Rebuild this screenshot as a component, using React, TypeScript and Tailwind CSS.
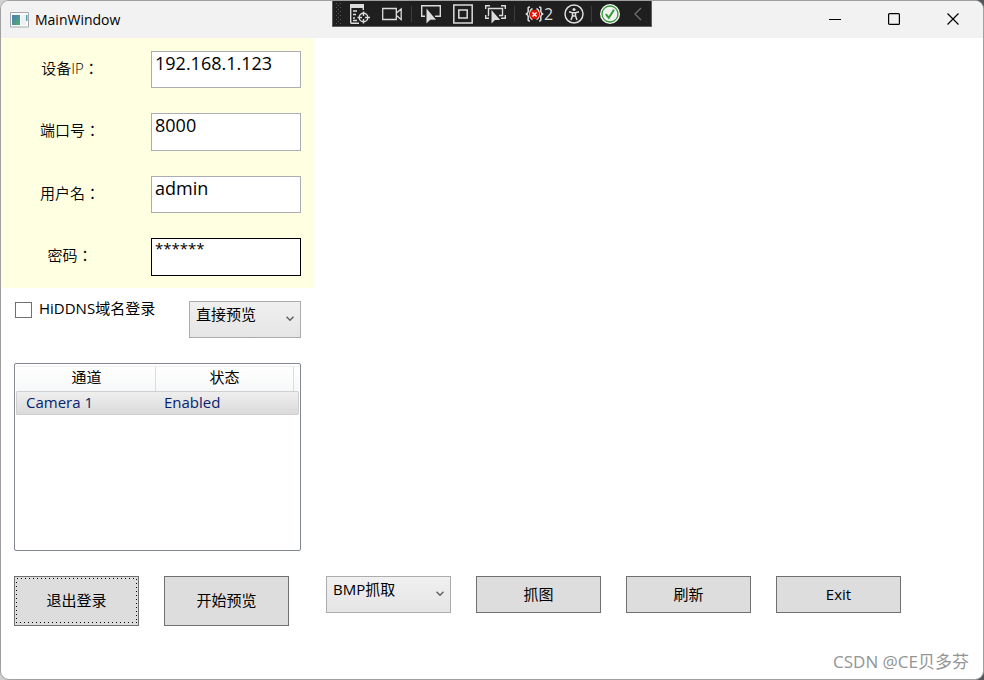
import { useState } from 'react';
import type { ReactNode } from 'react';

interface Field {
  id: string;
  label: string;
  value: string;
  boxClass: string;
}

const FIELDS: Field[] = [
  { id: 'ip', label: '设备IP：', value: '192.168.1.123', boxClass: 'h-[37px] pb-3.5 text-[18px] border-[#abadb3]' },
  { id: 'port', label: '端口号：', value: '8000', boxClass: 'h-[38px] pb-3.5 text-[18px] border-[#abadb3]' },
  { id: 'user', label: '用户名：', value: 'admin', boxClass: 'h-[37px] pb-3.5 text-[18px] border-[#abadb3]' },
  { id: 'password', label: '密码：', value: '******', boxClass: 'h-[38px] pb-[18px] text-[15px] border-black' },
];

const CHANNELS = [{ name: 'Camera 1', status: 'Enabled' }];

function ToolButton({ label, className, children }: { label: string; className: string; children: ReactNode }) {
  return (
    <button type="button" aria-label={label} className={`flex h-full items-center justify-center ${className}`}>
      {children}
    </button>
  );
}

function Separator() {
  return <span className="mx-[3px] h-4 w-px bg-[#3d3d3d]" />;
}

function DebugToolbar() {
  return (
    <div className="absolute -top-px left-1/2 flex h-[27px] w-80 -translate-x-1/2 items-center border border-[#5f5f5f] bg-[#1f1f1f] text-[#dcdcdc]">
      <svg className="mr-px ml-0.5" width="8" height="22" viewBox="0 0 8 22" fill="#555" shapeRendering="crispEdges">
        {[0, 4, 8, 12, 16, 20].map((y) => (
          <g key={y}>
            <path d={`M1 ${y}h1v1h-1zM5 ${y}h1v1h-1z`} />
            <path d={`M3 ${y + 2}h1v1h-1z`} />
          </g>
        ))}
      </svg>
      <ToolButton label="实时可视化树" className="w-8">
        <svg width="20" height="20" viewBox="0 0 20 20" fill="none" stroke="currentColor" strokeWidth="1.4">
          <path d="M.7 19.3V.7h12.6V6M.7 2.2h12.6M.7 19.3H9" />
          <path d="M1 1h12v3H1z" fill="currentColor" stroke="none" />
          <path d="M3 7h4M3 10.500h3M3 14h2M3 16.500h4" />
          <circle cx="13.500" cy="13.500" r="4.300" />
          <path d="M13.500 7.500v4.500M13.500 15v4.500M7.500 13.500H12M15 13.500h5" />
        </svg>
      </ToolButton>
      <ToolButton label="录制" className="w-8">
        <svg width="20" height="20" viewBox="0 0 20 20" fill="none" stroke="currentColor" strokeWidth="1.3">
          <path d="M.7 4.500h13.600v11H.7zM14.500 9l4.700-4v10.500l-4.700-4" />
        </svg>
      </ToolButton>
      <Separator />
      <ToolButton label="选择元素" className="w-8">
        <svg width="20" height="20" viewBox="0 0 20 20" fill="none" stroke="currentColor" strokeWidth="1.4">
          <path d="M4 12.300H.7V1.700h18.600v10.600H14" />
          <path d="M5.500 4.500v15l3.700-3.700h5.800z" fill="currentColor" stroke="none" />
        </svg>
      </ToolButton>
      <ToolButton label="显示布局装饰器" className="w-8">
        <svg width="20" height="20" viewBox="0 0 20 20" fill="none" stroke="currentColor" strokeWidth="1.5">
          <path d="M.8 1h18.400v18H.8zM5.800 6h8.400v8H5.800z" />
        </svg>
      </ToolButton>
      <ToolButton label="跟踪具有焦点的元素" className="w-8">
        <svg width="21" height="20" viewBox="0 0 21 20" fill="none" stroke="currentColor" strokeWidth="1.4">
          <path d="M.7 5V1.700H5M16 1.700h4.300V5M.7 11v3.300H4M20.300 11v3.300H16" />
          <path d="M4 11.500H3.500V4.500h14v7H14" />
          <path d="M6.500 6v13.500l3.400-3.400h5.300z" fill="currentColor" stroke="none" />
        </svg>
      </ToolButton>
      <Separator />
      <ToolButton label="绑定失败" className="w-[42px]">
        <svg width="19" height="16" viewBox="0 0 19 16" fill="none" stroke="currentColor" strokeWidth="1.500">
          <path d="M5 1C2 1 3.500 3 3.200 5.500 3 7 2 7.800.8 8 2 8.200 3 9 3.200 10.500 3.500 13 2 15 5 15" />
          <path d="M14 1c3 0 1.500 2 1.800 4.500.2 1.500 1.200 2.300 2.400 2.500-1.200.2-2.200 1-2.400 2.500-.3 2.500 1.200 4.500-1.800 4.500" />
          <path d="M7.500 2.500C4 4 4 12 7.500 13.500M11.500 2.500C15 4 15 12 11.500 13.500" />
          <circle cx="9.500" cy="8.500" r="4.800" fill="#e51400" stroke="none" />
          <path d="M7.500 6.500l4 4M11.500 6.500l-4 4" stroke="#fff" />
        </svg>
        <span className="text-[16px] leading-5">2</span>
      </ToolButton>
      <ToolButton label="辅助功能检查" className="w-7">
        <svg width="20" height="20" viewBox="0 0 20 20" fill="none" stroke="currentColor" strokeWidth="1.5">
          <circle cx="10" cy="10" r="9" />
          <circle cx="10" cy="5.500" r="1.600" fill="currentColor" stroke="none" />
          <path d="M5 7.800l3.500 1v3L7 16M15 7.800l-3.500 1v3L13 16M8.500 8.800h3M8.500 12h3" />
        </svg>
      </ToolButton>
      <Separator />
      <ToolButton label="热重载" className="w-[30px]">
        <svg width="20" height="20" viewBox="0 0 20 20" fill="none">
          <circle cx="10" cy="10" r="10" fill="#f2f2f2" />
          <circle cx="10" cy="10" r="8" stroke="#339933" strokeWidth="1.300" />
          <path d="M5.800 10.200l3 3.600 5.200-8" stroke="#339933" strokeWidth="2" />
        </svg>
      </ToolButton>
      <ToolButton label="折叠" className="w-[26px]">
        <svg width="8" height="14" viewBox="0 0 8 14" fill="none" stroke="#707070" strokeWidth="1.300">
          <path d="M7 1L1 7l6 6" />
        </svg>
      </ToolButton>
    </div>
  );
}

function TitleBar() {
  return (
    <header className="relative flex h-[37px] items-center bg-[#f2f2f2]">
      <svg className="ml-[9px]" width="19" height="16" viewBox="0 0 19 16" fill="none">
        <defs>
          <linearGradient id="pane" x1="0" y1="0" x2="1" y2="1">
            <stop offset="0" stopColor="#4a7fb5" />
            <stop offset="1" stopColor="#4fae6c" />
          </linearGradient>
        </defs>
        <path d="M.5.500h18v14.500H.5z" fill="#fff" stroke="#a3a9af" />
        <path d="M2 3h8v10H2z" fill="url(#pane)" />
        <path d="M11 3h5v10h-5z" fill="#eef1f4" />
        <path d="M16 3h1.500v6H16z" fill="#5a9fb0" />
      </svg>
      <h1 className="ml-[6px] text-[14px] leading-5">MainWindow</h1>
      <DebugToolbar />
      <div className="ml-auto flex h-full pr-px pb-0.5">
        <button type="button" aria-label="最小化" className="flex w-[59px] items-center justify-center">
          <svg width="12" height="12" viewBox="0 0 12 12" stroke="#000">
            <path d="M0 6.500h12" />
          </svg>
        </button>
        <button type="button" aria-label="最大化" className="flex w-[59px] items-center justify-center">
          <svg width="12" height="12" viewBox="0 0 12 12" fill="none" stroke="#000" strokeWidth="1.200">
            <rect x=".6" y=".6" width="10.800" height="10.800" rx="1" />
          </svg>
        </button>
        <button type="button" aria-label="关闭" className="flex w-[59px] items-center justify-center">
          <svg width="12" height="12" viewBox="0 0 12 12" stroke="#000" strokeWidth="1.200">
            <path d="M.5.500l11 11M11.500.500l-11 11" />
          </svg>
        </button>
      </div>
    </header>
  );
}

function ComboBox({ label, options, className }: { label: string; options: string[]; className: string }) {
  return (
    <div className={`relative ${className}`}>
      <select
        aria-label={label}
        className="block h-[37px] w-full appearance-none border border-[#acacac] bg-linear-to-b from-[#f0f0f0] to-[#e5e5e5] pb-3 pl-[6px] text-[15px] leading-5 outline-none"
      >
        {options.map((o) => (
          <option key={o}>{o}</option>
        ))}
      </select>
      <svg
        className="pointer-events-none absolute top-[15px] right-[7px]"
        width="8"
        height="6"
        viewBox="0 0 8 6"
        fill="none"
        stroke="#606060"
        strokeWidth="1.500"
      >
        <path d="M.5.800L4 4.300 7.500.800" />
      </svg>
    </div>
  );
}

function PushButton({ children, className }: { children: ReactNode; className: string }) {
  return (
    <button
      type="button"
      className={`relative w-[125px] border border-[#707070] bg-[#dddddd] pb-0.5 text-[15px] leading-5 ${className}`}
    >
      {children}
    </button>
  );
}

// 键盘焦点虚线框
function FocusRect() {
  return (
    <svg className="absolute inset-px size-[calc(100%-2px)]" fill="none" stroke="#000" shapeRendering="crispEdges">
      <rect x="0.500" y="0.500" width="120" height="44" strokeDasharray="1 3" />
    </svg>
  );
}

function ChannelList() {
  return (
    <div className="mt-[25px] ml-[13px] flex-1 rounded-[2px] border border-[#828790] px-px pt-0.5">
      <table className="w-full table-fixed border-separate border-spacing-0 text-[15px] leading-5">
        <colgroup>
          <col className="w-[140px]" />
          <col className="w-[138px]" />
          <col />
        </colgroup>
        <thead>
          <tr className="h-[25px] bg-linear-to-b from-white to-[#f7f8f9]">
            <th className="border-t border-r border-t-[#f0f0f0] border-r-[#dcdcdc] pt-0 pr-0 pb-1 pl-0.5 font-normal">通道</th>
            <th className="border-t border-r border-t-[#f0f0f0] border-r-[#dcdcdc] px-0 pt-0 pb-1 font-normal">状态</th>
            <th className="border-t border-t-[#f0f0f0] p-0" />
          </tr>
        </thead>
        <tbody>
          {CHANNELS.map((c) => (
            <tr key={c.name} className="h-6 bg-linear-to-b from-[#f0f0f0] to-[#d9d9d9] text-[#042271]">
              <td className="rounded-l-[2px] border-y border-l border-[#cfcfcf] pt-0 pr-0 pb-0.5 pl-[9px]">{c.name}</td>
              <td className="border-y border-[#cfcfcf] pt-0 pr-0 pb-0.5 pl-2">{c.status}</td>
              <td className="rounded-r-[2px] border-y border-r border-[#cfcfcf] p-0" />
            </tr>
          ))}
        </tbody>
      </table>
    </div>
  );
}

export default function App() {
  const [useDdns, setUseDdns] = useState(false);

  return (
    <div className="flex min-h-screen bg-linear-to-r from-[#d0d0d0] to-[#55555f] font-['Open_Sans','Noto_Sans_CJK_SC',sans-serif] text-black">
      <div className="flex flex-1 flex-col overflow-hidden rounded-[9px] border border-[#a0a0a0] bg-white">
        <TitleBar />

        <main className="flex flex-1">
          <aside className="flex w-[313px] shrink-0 flex-col">
            <form className="flex flex-col gap-[25px] bg-[#ffffe1] pt-[13px] pr-[13px] pb-3">
              {FIELDS.map((f) => (
                <div key={f.id} className="flex">
                  <label
                    htmlFor={f.id}
                    className="mr-3 flex-1 pt-[7px] text-center font-['Open_Sans','Noto_Sans_CJK_TC',sans-serif] text-[15px] leading-5 font-[350]"
                  >
                    {f.label}
                  </label>
                  <input
                    id={f.id}
                    type="text"
                    defaultValue={f.value}
                    className={`w-[150px] border bg-white pl-[3px] outline-none ${f.boxClass}`}
                  />
                </div>
              ))}
            </form>

            <div className="flex items-start pt-[13px] pr-[13px] pl-[14px]">
              <input
                id="ddns"
                type="checkbox"
                checked={useDdns}
                onChange={(e) => setUseDdns(e.target.checked)}
                className="mt-px h-4 w-[17px] appearance-none border border-[#707070] bg-white checked:bg-[#707070]"
              />
              <label htmlFor="ddns" className="ml-[7px] flex-1 text-[15px] leading-[14px]">
                HiDDNS域名登录
              </label>
              <ComboBox label="预览方式" options={['直接预览', '回调预览']} className="w-28" />
            </div>

            <div className="flex flex-1 flex-col pr-[13px]">
              <ChannelList />
            </div>
          </aside>
          <section aria-label="预览画面" className="flex-1" />
        </main>

        <div className="flex items-start gap-[25px] pt-[25px] pl-[13px]">
          <PushButton className="h-[50px]">
            退出登录
            <FocusRect />
          </PushButton>
          <PushButton className="h-[50px]">开始预览</PushButton>
          <ComboBox label="抓图格式" options={['BMP抓取', 'JPEG抓取']} className="ml-3 w-[125px]" />
          <PushButton className="h-[37px]">抓图</PushButton>
          <PushButton className="h-[37px]">刷新</PushButton>
          <PushButton className="h-[37px]">Exit</PushButton>
        </div>

        <footer className="h-[53px] pt-6 pr-[14px] text-right text-[17px] leading-6 text-[#949494]">
          CSDN @CE贝多芬
        </footer>
      </div>
    </div>
  );
}
